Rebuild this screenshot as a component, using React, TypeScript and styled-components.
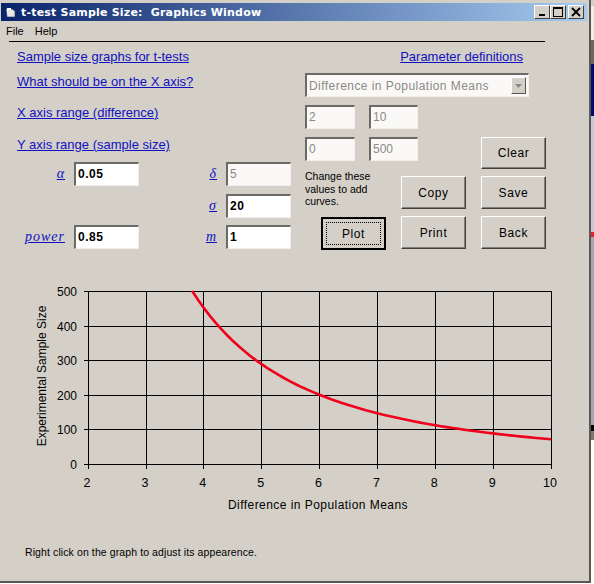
import styled, { createGlobalStyle } from "styled-components";

const Global = createGlobalStyle`
  html, body { margin: 0; padding: 0; background: #fff; overflow: hidden; }
  body { font-family: "Liberation Sans", Arial, sans-serif; }
`;

const Screen = styled.div`
  display: flex;
  width: 594px;
  height: 584px;
`;

const Win = styled.div`
  width: 591px;
  height: 583px;
  box-sizing: border-box;
  padding: 3px 0 0 0;
  background: #d4d0c8;
  border-right: 2px solid #5a5852;
  border-bottom: 2px solid #5a5852;
  color: #000;
`;

const Backdrop = styled.div`
  flex: 1;
  display: flex;
  flex-direction: column;
`;

const Strip = styled.div<{ $h: number; $c: string }>`
  height: ${(p) => p.$h}px;
  background: ${(p) => p.$c};
`;

const TitleBar = styled.div`
  height: 18px;
  margin: 0 2px 0 1px;
  display: flex;
  align-items: center;
  padding: 0 3px 0 4px;
  background: linear-gradient(90deg, #0a246a 0%, #a6caf0 100%);
  color: #fff;
  font: bold 11px "DejaVu Sans", sans-serif;
  letter-spacing: 0.2px;
  white-space: pre;
`;

const TitleText = styled.span`
  margin-left: 4px;
  flex: 1;
`;

const CaptionBtn = styled.div<{ $gap?: number }>`
  width: 16px;
  height: 14px;
  box-sizing: border-box;
  margin-left: ${(p) => p.$gap ?? 0}px;
  background: #d4d0c8;
  border: 1px solid;
  border-color: #fff #404040 #404040 #fff;
  display: flex;
  align-items: center;
  justify-content: center;
`;

const MenuBar = styled.div`
  height: 20px;
  display: flex;
  align-items: center;
  gap: 11px;
  padding-left: 6px;
  font-size: 11px;
`;

const Rule = styled.div`
  height: 1px;
  margin-left: 9px;
  width: 536px;
  background: #000;
`;

const Form = styled.div`
  display: flex;
  height: 227px;
`;

const LeftCol = styled.div`
  width: 288px;
  margin-left: 17px;
  display: flex;
  flex-direction: column;
`;

const LinkText = styled.a<{ $top: number }>`
  margin-top: ${(p) => p.$top}px;
  font-size: 13px;
  line-height: 16px;
  color: #1010c0;
  text-decoration: underline;
  align-self: flex-start;
`;

const ParamGrid = styled.div`
  display: grid;
  grid-template-columns: 49px 65px 87px 65px;
  grid-auto-rows: 24px;
  row-gap: 7.5px;
  margin-top: 9px;
  margin-left: 8px;
  align-items: center;
`;

const Sym = styled.a`
  font: italic 14px "Liberation Serif", serif;
  color: #1010c0;
  text-decoration: underline;
  justify-self: end;
  margin-right: 9px;
  letter-spacing: 1px;
`;

const Field = styled.div<{ $w?: number; $off?: boolean; $bold?: boolean }>`
  width: ${(p) => p.$w ?? 65}px;
  height: 24px;
  box-sizing: border-box;
  background: ${(p) => (p.$off ? "#faf9f7" : "#fff")};
  border-style: solid;
  border-width: 2px 1px 1px 2px;
  border-color: #6a6a66 #f2f0ec #f2f0ec #6a6a66;
  padding-left: 2px;
  font-size: 12px;
  font-weight: ${(p) => (p.$bold ? 700 : 400)};
  letter-spacing: ${(p) => (p.$bold ? 0.5 : 0)}px;
  line-height: 20px;
  color: ${(p) => (p.$off ? "#8a8a86" : "#000")};
`;

const RightCol = styled.div`
  width: 241px;
  display: flex;
  flex-direction: column;
`;

const RightLink = styled(LinkText)`
  align-self: flex-end;
  margin-right: 23px;
`;

const Combo = styled.div`
  width: 224px;
  height: 24px;
  margin-top: 8px;
  box-sizing: border-box;
  background: #faf9f7;
  border-style: solid;
  border-width: 2px 1px 1px 2px;
  border-color: #6a6a66 #f2f0ec #f2f0ec #6a6a66;
  display: flex;
  align-items: center;
  padding: 0 2px 0 2px;
  font-size: 12px;
  letter-spacing: 0.45px;
  color: #8a8a86;
`;

const ComboText = styled.span`
  flex: 1;
`;

const ComboArrow = styled.div`
  width: 15px;
  height: 17px;
  box-sizing: border-box;
  background: #d4d0c8;
  border: 1px solid;
  border-color: #fff #555 #555 #fff;
  display: flex;
  align-items: center;
  justify-content: center;
`;

const FieldRow = styled.div<{ $top: number }>`
  display: flex;
  gap: 14px;
  margin-top: ${(p) => p.$top}px;
`;

const Lower = styled.div`
  display: flex;
  margin-top: 8px;
`;

const LowerMain = styled.div`
  width: 176px;
  display: flex;
  flex-direction: column;
`;

const ButtonStack = styled.div<{ $top?: number }>`
  display: flex;
  flex-direction: column;
  gap: 7px;
  margin-top: ${(p) => p.$top ?? 0}px;
`;

const ActionRow = styled.div`
  display: flex;
  margin-top: 9px;
`;

const NoteCol = styled.div`
  width: 96px;
`;

const Note = styled.div`
  font-size: 10.5px;
  line-height: 12.5px;
  height: 47px;
`;

const Btn = styled.div<{ $h?: number }>`
  width: 65px;
  height: ${(p) => p.$h ?? 33}px;
  box-sizing: border-box;
  background: #d4d0c8;
  border: 1px solid;
  border-color: #fff #404040 #404040 #fff;
  box-shadow: inset -1px -1px 0 #808080;
  display: flex;
  align-items: center;
  justify-content: center;
  font-size: 12px;
  letter-spacing: 0.6px;
`;

const DefaultBtn = styled(Btn)`
  margin-left: 16px;
  border: 2px solid #000;
  box-shadow: none;
  outline: 1px dotted #000;
  outline-offset: -6px;
`;

const Chart = styled.svg`
  display: block;
`;

const Hint = styled.div`
  margin: 17px 0 0 25px;
  font-size: 10.5px;
  letter-spacing: 0.1px;
`;

const xAt = (d: number) => 88 + (d - 2) * 57.875;
const yAt = (n: number) => 195.3 - n * 0.3452;
const snapX = (d: number) => Math.round(xAt(d) - 0.3) + 0.5;
const snapY = (n: number) => Math.round(yAt(n) - 0.4) + 0.5;

const curve = () => {
  const pts: string[] = [];
  for (let i = 0; i <= 62; i++) {
    const d = 3.8 + i * 0.1;
    pts.push(`${xAt(d).toFixed(1)},${yAt(7250 / (d * d)).toFixed(1)}`);
  }
  return pts.join(" ");
};

const xTicks = [2, 3, 4, 5, 6, 7, 8, 9, 10];
const yTicks = [0, 100, 200, 300, 400, 500];

const SampleChart = () => (
  <Chart width="589" height="260" viewBox="0 0 589 260">
    {xTicks.map((t) => (
      <g key={t}>
        <line x1={snapX(t)} x2={snapX(t)} y1={snapY(500)} y2={snapY(0) + 4} stroke="#000" shapeRendering="crispEdges" />
        <text x={xAt(t) - 1} y={217.5} textAnchor="middle" fontSize="12.5" fontFamily="Liberation Sans">
          {t}
        </text>
      </g>
    ))}
    {yTicks.map((t) => (
      <g key={t}>
        <line x1={84} x2={snapX(10)} y1={snapY(t)} y2={snapY(t)} stroke="#000" shapeRendering="crispEdges" />
        <text x={77} y={yAt(t) + 4.5} textAnchor="end" fontSize="12" fontFamily="Liberation Sans">
          {t}
        </text>
      </g>
    ))}
    <polyline points={curve()} fill="none" stroke="#f0001c" strokeWidth="2.6" />
    <text x={318} y={239.5} textAnchor="middle" fontSize="12" letterSpacing="0.45" fontFamily="Liberation Sans">
      Difference in Population Means
    </text>
    <text
      transform="translate(46 107) rotate(-90)"
      textAnchor="middle"
      fontSize="12"
      fontFamily="Liberation Sans"
    >
      Experimental Sample Size
    </text>
  </Chart>
);

const App = () => {
  return (
    <Screen>
      <Global />
      <Win>
        <TitleBar>
          <svg width="12" height="11" viewBox="0 0 12 11">
            <path d="M1 2h6l3 2v6H2z" fill="#e8e8e8" stroke="#20305a" strokeWidth="0.6" />
            <path d="M2 1h4v2H2z" fill="#fff" />
          </svg>
          <TitleText>t-test Sample Size:  Graphics Window</TitleText>
          <CaptionBtn>
            <svg width="10" height="10" viewBox="0 0 10 10">
              <rect x="2" y="7" width="6" height="2" fill="#000" />
            </svg>
          </CaptionBtn>
          <CaptionBtn>
            <svg width="10" height="10" viewBox="0 0 10 10">
              <rect x="0.5" y="0.5" width="9" height="9" fill="none" stroke="#000" />
              <rect x="0" y="0" width="10" height="2" fill="#000" />
            </svg>
          </CaptionBtn>
          <CaptionBtn $gap={2}>
            <svg width="10" height="10" viewBox="0 0 10 10">
              <path d="M1 1l8 8M9 1l-8 8" stroke="#000" strokeWidth="1.8" />
            </svg>
          </CaptionBtn>
        </TitleBar>
        <MenuBar>
          <span>File</span>
          <span>Help</span>
        </MenuBar>
        <Rule />
        <Form>
          <LeftCol>
            <LinkText $top={7}>Sample size graphs for t-tests</LinkText>
            <LinkText $top={9}>What should be on the X axis?</LinkText>
            <LinkText $top={15}>X axis range (difference)</LinkText>
            <LinkText $top={16}>Y axis range (sample size)</LinkText>
            <ParamGrid>
              <Sym>α</Sym>
              <Field $bold>0.05</Field>
              <Sym>δ</Sym>
              <Field $off>5</Field>
              <span />
              <span />
              <Sym>σ</Sym>
              <Field $bold>20</Field>
              <Sym>power</Sym>
              <Field $bold>0.85</Field>
              <Sym>m</Sym>
              <Field $bold>1</Field>
            </ParamGrid>
          </LeftCol>
          <RightCol>
            <RightLink $top={7}>Parameter definitions</RightLink>
            <Combo>
              <ComboText>Difference in Population Means</ComboText>
              <ComboArrow>
                <svg width="9" height="6" viewBox="0 0 9 6">
                  <path d="M1 1h7L4.5 5z" fill="#8a8a86" />
                </svg>
              </ComboArrow>
            </Combo>
            <FieldRow $top={8}>
              <Field $w={50} $off>2</Field>
              <Field $w={49} $off>10</Field>
            </FieldRow>
            <Lower>
              <LowerMain>
                <FieldRow $top={0}>
                  <Field $w={50} $off>0</Field>
                  <Field $w={49} $off>500</Field>
                </FieldRow>
                <ActionRow>
                  <NoteCol>
                    <Note>Change these values to add curves.</Note>
                    <DefaultBtn>Plot</DefaultBtn>
                  </NoteCol>
                  <ButtonStack $top={6}>
                    <Btn>Copy</Btn>
                    <Btn>Print</Btn>
                  </ButtonStack>
                </ActionRow>
              </LowerMain>
              <ButtonStack>
                <Btn $h={32}>Clear</Btn>
                <Btn>Save</Btn>
                <Btn>Back</Btn>
              </ButtonStack>
            </Lower>
          </RightCol>
        </Form>
        <SampleChart />
        <Hint>Right click on the graph to adjust its appearence.</Hint>
      </Win>
      <Backdrop>
        <Strip $h={6} $c="#d4d0c8" />
        <Strip $h={34} $c="#eeeeee" />
        <Strip $h={24} $c="#666666" />
        <Strip $h={52} $c="#000a6a" />
        <Strip $h={116} $c="#c6c8d8" />
        <Strip $h={5} $c="#e0202c" />
        <Strip $h={188} $c="#a4a8b2" />
        <Strip $h={6} $c="#000000" />
        <Strip $h={9} $c="#777777" />
        <Strip $h={144} $c="#ffffff" />
      </Backdrop>
    </Screen>
  );
};

export default App;
